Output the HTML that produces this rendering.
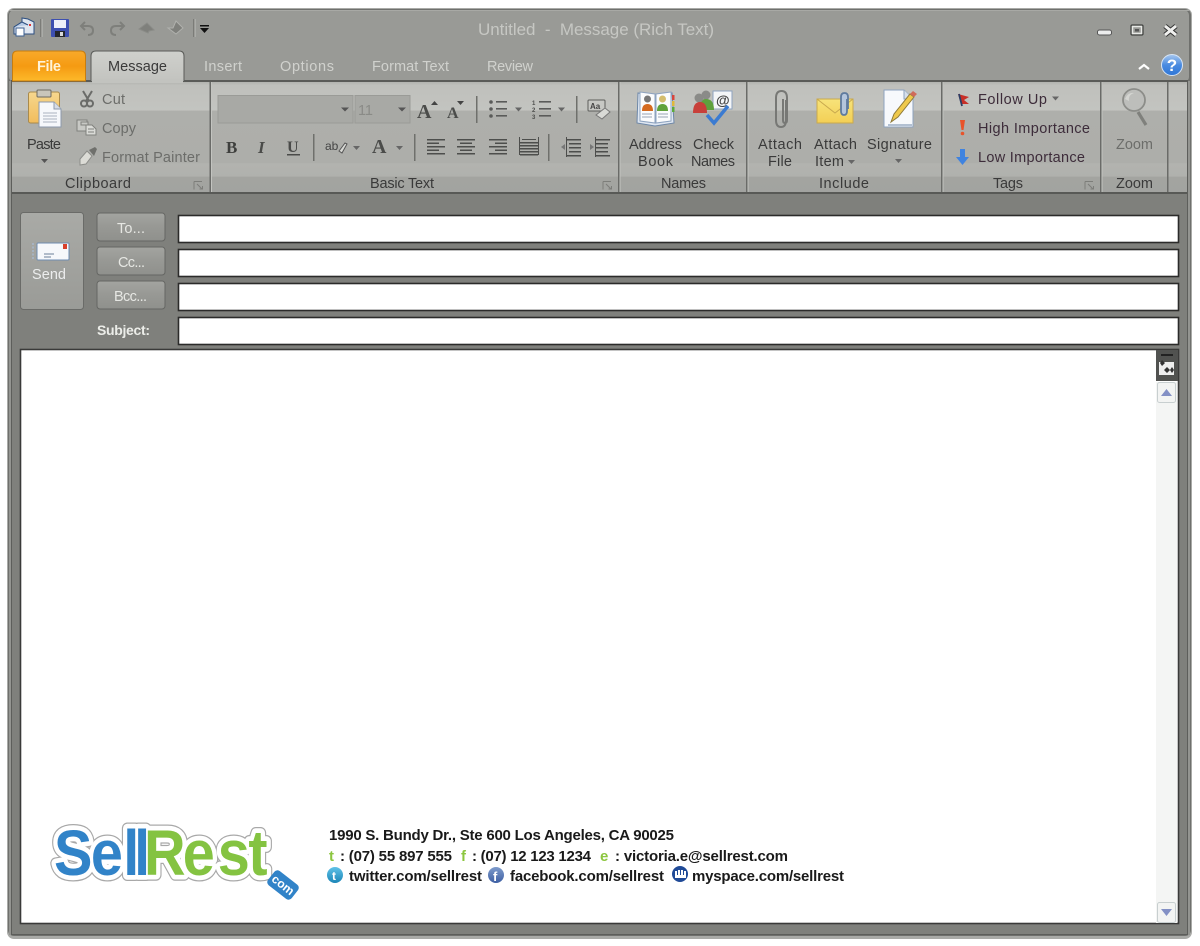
<!DOCTYPE html>
<html lang="en"><head><meta charset="utf-8"><title>Untitled - Message (Rich Text)</title>
<style>
html,body{margin:0;padding:0;background:#fff;width:1200px;height:946px;overflow:hidden}
svg{position:absolute;left:0;top:0;display:block;filter:blur(.3px)}
text{font-family:"Liberation Sans",sans-serif;font-size:14.500px;fill:#3c3c3c;white-space:pre}
.tab{fill:#d0d1cd}
.d{fill:#6c6d6a}
.l{fill:#e4e5e1}
.g{fill:#3a3a3a}
.f{font-weight:bold;fill:#1a1a1a;font-size:15px}
.gr{font-weight:bold;fill:#8cc63f;font-size:15px}
</style></head><body>
<svg width="1200" height="946" viewBox="0 0 1200 946" xmlns="http://www.w3.org/2000/svg">
<defs>
<linearGradient id="rib" x1="0" y1="0" x2="0" y2="1">
<stop offset="0" stop-color="#b2b3af"/><stop offset=".03" stop-color="#bfc0bc"/><stop offset=".25" stop-color="#c3c4c0"/><stop offset=".26" stop-color="#aeafab"/><stop offset=".72" stop-color="#adaeaa"/><stop offset=".73" stop-color="#b2b3af"/><stop offset=".84" stop-color="#b0b1ad"/><stop offset=".85" stop-color="#a3a4a0"/><stop offset="1" stop-color="#a2a3a0"/>
</linearGradient>
<linearGradient id="file" x1="0" y1="0" x2="0" y2="1"><stop offset="0" stop-color="#f9a92a"/><stop offset=".5" stop-color="#f59a12"/><stop offset="1" stop-color="#fdb92a"/></linearGradient>
<linearGradient id="msg" x1="0" y1="0" x2="0" y2="1"><stop offset="0" stop-color="#cfd0cc"/><stop offset="1" stop-color="#c2c3bf"/></linearGradient>
<linearGradient id="btn" x1="0" y1="0" x2="0" y2="1"><stop offset="0" stop-color="#a3a4a0"/><stop offset=".45" stop-color="#989995"/><stop offset="1" stop-color="#8f908c"/></linearGradient>
<linearGradient id="send" x1="0" y1="0" x2="0" y2="1"><stop offset="0" stop-color="#a9aaa6"/><stop offset="1" stop-color="#9a9b97"/></linearGradient>
<linearGradient id="help" x1="0" y1="0" x2="0" y2="1"><stop offset="0" stop-color="#a8c8ef"/><stop offset=".5" stop-color="#4a8be0"/><stop offset="1" stop-color="#2f76d6"/></linearGradient>
<linearGradient id="pap" x1="0" y1="0" x2="0" y2="1"><stop offset="0" stop-color="#f6d78e"/><stop offset="1" stop-color="#f2bc5c"/></linearGradient>
<linearGradient id="env" x1="0" y1="0" x2="0" y2="1"><stop offset="0" stop-color="#f7e37a"/><stop offset="1" stop-color="#f3cf55"/></linearGradient>
<linearGradient id="tw" x1="0" y1="0" x2="0" y2="1"><stop offset="0" stop-color="#5fc2e8"/><stop offset="1" stop-color="#1c86b8"/></linearGradient>
<linearGradient id="fb" x1="0" y1="0" x2="0" y2="1"><stop offset="0" stop-color="#7f9ccc"/><stop offset="1" stop-color="#3d5fa3"/></linearGradient>
</defs>

<!-- window frame -->
<rect x="7" y="8" width="1185" height="931" rx="7" fill="#a9aaa7"/>
<rect x="8" y="9" width="1183" height="927" rx="6" fill="#6f706d"/>
<rect x="9" y="10" width="1180" height="72" rx="5" fill="#999a96"/>
<rect x="9" y="10" width="1180" height="1" fill="#a8a9a5"/>
<rect x="9" y="81" width="3" height="854" fill="#949591"/>
<rect x="1188" y="81" width="2" height="854" fill="#949591"/>
<rect x="11" y="81" width="1177" height="854" fill="#5d5e5b"/>
<rect x="12" y="194" width="1175" height="740" fill="#7f807c"/>

<!-- ribbon -->
<rect x="11" y="80" width="1177" height="2" fill="#5a5b58"/>
<rect x="12" y="82" width="1175" height="112" fill="url(#rib)"/>
<rect x="12" y="192" width="1175" height="2" fill="#585956"/>
<g fill="#6a6b68"><rect x="209.500" y="82" width="1.500" height="110"/><rect x="618" y="82" width="1.500" height="110"/><rect x="746" y="82" width="1.500" height="110"/><rect x="941" y="82" width="1.500" height="110"/><rect x="1100" y="82" width="1.500" height="110"/><rect x="1167" y="82" width="1.500" height="110"/></g>
<g fill="#c3c4c0"><rect x="211" y="82" width="1" height="110"/><rect x="619.500" y="82" width="1" height="110"/><rect x="747.500" y="82" width="1" height="110"/><rect x="942.500" y="82" width="1" height="110"/><rect x="1101.500" y="82" width="1" height="110"/></g>

<!-- tabs -->
<path d="M12.500 81V56q0-5 5-5h63q5 0 5 5v25z" fill="url(#file)" stroke="#c77d10"/>
<path d="M91 81.500V56q0-5 5-5h83q5 0 5 5v25.500z" fill="url(#msg)" stroke="#5a5b58"/>
<rect x="92" y="79" width="91" height="4" fill="#c2c3bf"/>
<text x="37" y="71" textLength="24" style="font-weight:bold;fill:#fff3d8">File</text>
<text x="108" y="71" textLength="59" class="g">Message</text>
<text x="204" y="71" textLength="38" class="tab">Insert</text>
<text x="280" y="71" textLength="54" class="tab">Options</text>
<text x="372" y="71" textLength="77" class="tab">Format Text</text>
<text x="487" y="71" textLength="46" class="tab">Review</text>

<!-- title -->
<text x="478" y="35" textLength="236" style="font-size:17px;fill:#c6c7c3">Untitled  -  Message (Rich Text)</text>

<!-- QAT -->
<g>
<path d="M14 27l8-5v-4l6 1 6 3v12H14z" fill="#dfe6f0" stroke="#2d4f80" stroke-width="1"/>
<path d="M14 27l8-5 6 3" fill="#b7cbe6" stroke="#2d4f80"/>
<rect x="16" y="28" width="8" height="8" fill="#fff" stroke="#3b5f92"/>
<rect x="29" y="24" width="2" height="2" fill="#d33"/>
<rect x="40" y="19" width="1.500" height="18" fill="#7b7c78"/><rect x="41.500" y="19" width="1" height="18" fill="#bcbdb9"/>
<rect x="51" y="19" width="18" height="18" rx="1" fill="#3d4fb0"/>
<rect x="54" y="20" width="12" height="8" fill="#eef0fa"/>
<rect x="55" y="31" width="10" height="6" fill="#24262c"/><rect x="60" y="32" width="3" height="4" fill="#d8d9dc"/>
<path d="M85 22l-4 4 4 4M82 26h6q5 0 5 4.500t-5 4.500" fill="none" stroke="#7e7f7b" stroke-width="2"/>
<path d="M120 22l4 4-4 4M123 26h-7q-5 0-5 4.500t5 4.500" fill="none" stroke="#7e7f7b" stroke-width="2"/>
<path d="M147 23l7 7-5 1-1 2-9-4z" fill="#7f807c" stroke="#8a8b87"/>
<path d="M176 21l7 7-7 6-8-6h5z" fill="#7f807c" stroke="#b0b1ad"/>
<rect x="193" y="19" width="1.500" height="18" fill="#7b7c78"/><rect x="194.500" y="19" width="1" height="18" fill="#bcbdb9"/>
<rect x="200" y="25" width="9" height="1.500" fill="#111"/><path d="M200 28h9l-4.500 5z" fill="#111"/>
</g>

<!-- window controls -->
<rect x="1097.500" y="30" width="14" height="5" rx="2" fill="#eceded" stroke="#555" stroke-width="1"/>
<rect x="1131" y="25" width="12" height="10" rx="1" fill="none" stroke="#2d2e2c" stroke-width="1"/>
<rect x="1132.500" y="26.500" width="9" height="7" fill="none" stroke="#e8e9e6" stroke-width="1.500"/>
<rect x="1135" y="29" width="4" height="2.500" fill="#555"/>
<path d="M1165 26l11 9M1176 26l-11 9" stroke="#333" stroke-width="5"/>
<path d="M1165 26l11 9M1176 26l-11 9" stroke="#f0f0ee" stroke-width="3"/>
<path d="M1139 69l5-4 5 4" fill="none" stroke="#fff" stroke-width="2.200"/>
<circle cx="1172" cy="65" r="10.500" fill="url(#help)" stroke="#d8e6f6" stroke-width="1"/>
<text x="1172" y="71" text-anchor="middle" style="font-size:17px;font-weight:bold;fill:#fff">?</text>

<!-- Clipboard -->
<rect x="28.500" y="92" width="31" height="31" rx="2" fill="url(#pap)" stroke="#a98a4c"/>
<rect x="37" y="90" width="14" height="7" rx="1" fill="#c9c6bb" stroke="#6d6a60"/>
<path d="M39 102h15l7 7v18H39z" fill="#f6f8fb" stroke="#8d9aad"/>
<path d="M54 102v7h7" fill="#d6dce6" stroke="#8d9aad"/>
<path d="M43 113h14M43 116h14M43 119h14M43 122h14" stroke="#a9b2bf"/>
<text x="27" y="149" textLength="34" class="g">Paste</text>
<path d="M41 159h7l-3.500 4z" fill="#555"/>
<g fill="none" stroke="#6b6c69"><path d="M83 91l6 10M92 91l-6 10" stroke-width="2"/><circle cx="84" cy="103.500" r="3" stroke-width="2"/><circle cx="90" cy="103.500" r="3" stroke-width="2"/></g>
<text x="102" y="104" textLength="23" class="d">Cut</text>
<g stroke="#80817d" fill="#c8c9c5"><rect x="77" y="120" width="10" height="11"/><rect x="81" y="122" width="7" height="3"/><path d="M86 125h6l4 4v6H86z" fill="#dadbd7"/></g>
<path d="M88 129h6M88 132h6" stroke="#80817d"/>
<text x="102" y="133" textLength="34" class="d">Copy</text>
<path d="M80 159l7-8 5 5-6 8-6 1z" fill="#dcdcd6" stroke="#8d8e8a"/>
<path d="M89 150l6-3 2 2-3 7z" fill="#6f706c"/>
<text x="102" y="162" textLength="98" class="d">Format Painter</text>
<text x="65" y="188" textLength="66" class="g">Clipboard</text>
<g fill="none" stroke="#7d7e7a"><path d="M194 181.500h8M194 181.500v8"/><path d="M197 184l5 5M199.500 189h3v-3"/></g>
<g fill="none" stroke="#7d7e7a"><path d="M603 181.500h8M603 181.500v8"/><path d="M606 184l5 5M608.500 189h3v-3"/></g>
<g fill="none" stroke="#7d7e7a"><path d="M1085 181.500h8M1085 181.500v8"/><path d="M1088 184l5 5M1090.500 189h3v-3"/></g>

<!-- Basic Text row 1 -->
<rect x="218" y="95.500" width="135" height="27.500" fill="#a8a9a5" stroke="#9a9b97"/>
<rect x="355" y="95.500" width="55" height="27.500" fill="#a8a9a5" stroke="#9a9b97"/>
<path d="M341 107.500h8l-4 4z" fill="#555"/><path d="M398 107.500h8l-4 4z" fill="#555"/>
<text x="358" y="115" textLength="15" style="fill:#8a8b87">11</text>
<text x="417" y="118" textLength="15" style="font-family:'Liberation Serif',serif;font-size:20px;font-weight:bold;fill:#4b4c4a">A</text>
<path d="M431 105l3.500-4 3.500 4z" fill="#444"/>
<text x="447" y="118" textLength="12" style="font-family:'Liberation Serif',serif;font-size:16px;font-weight:bold;fill:#4b4c4a">A</text>
<path d="M457 101h7l-3.500 4z" fill="#444"/>
<g fill="#6f706c"><rect x="476" y="96" width="1.500" height="27"/><rect x="576" y="96" width="1.500" height="27"/><rect x="313" y="134" width="1.500" height="27"/><rect x="414" y="134" width="1.500" height="27"/><rect x="548" y="134" width="1.500" height="27"/></g>
<g fill="#5a5b59"><circle cx="491" cy="102" r="1.800"/><circle cx="491" cy="109" r="1.800"/><circle cx="491" cy="116" r="1.800"/>
<rect x="496" y="101" width="11" height="1.600"/><rect x="496" y="108" width="11" height="1.600"/><rect x="496" y="115" width="11" height="1.600"/>
<rect x="539" y="101" width="12" height="1.600"/><rect x="539" y="108" width="12" height="1.600"/><rect x="539" y="115" width="12" height="1.600"/></g>
<g style="fill:#4d4e4c"><text x="532" y="105" style="font-size:6px;font-weight:bold;fill:#4d4e4c">1</text><text x="532" y="112" style="font-size:6px;font-weight:bold;fill:#4d4e4c">2</text><text x="532" y="119" style="font-size:6px;font-weight:bold;fill:#4d4e4c">3</text></g>
<path d="M515 107.500h7l-3.500 4z" fill="#666"/><path d="M558 107.500h7l-3.500 4z" fill="#666"/>
<rect x="588" y="100" width="17" height="11" rx="1" fill="#c7c8c4" stroke="#5d5e5b"/>
<text x="590" y="109" style="font-size:8px;font-weight:bold;fill:#444">Aa</text>
<path d="M596 115l9-7 5 4-8 7z" fill="#d9dad6" stroke="#777"/>

<!-- Basic Text row 2 -->
<text x="226" y="153" style="font-family:'Liberation Serif',serif;font-size:17px;font-weight:bold;fill:#3e3f3d">B</text>
<text x="258" y="153" style="font-family:'Liberation Serif',serif;font-size:17px;font-style:italic;font-weight:bold;fill:#4a4b49">I</text>
<text x="287" y="152" style="font-family:'Liberation Serif',serif;font-size:16px;font-weight:bold;fill:#4a4b49">U</text>
<rect x="287" y="154" width="13" height="1.500" fill="#4a4b49"/>
<text x="325" y="150" style="font-size:12px;fill:#444">ab</text>
<path d="M339 151l6-8 2 1-5 9z" fill="#d8d9d5" stroke="#555"/>
<path d="M353 146h7l-3.500 4z" fill="#666"/>
<text x="372" y="153" style="font-family:'Liberation Serif',serif;font-size:20px;font-weight:bold;fill:#4b4c4a">A</text>
<path d="M396 146h7l-3.500 4z" fill="#666"/>
<g fill="#4d4e4c">
<rect x="427" y="139" width="18" height="1.500"/><rect x="427" y="142.500" width="12" height="1.500"/><rect x="427" y="146" width="18" height="1.500"/><rect x="427" y="149.500" width="12" height="1.500"/><rect x="427" y="153" width="18" height="1.500"/>
<rect x="457" y="139" width="18" height="1.500"/><rect x="460" y="142.500" width="12" height="1.500"/><rect x="457" y="146" width="18" height="1.500"/><rect x="460" y="149.500" width="12" height="1.500"/><rect x="457" y="153" width="18" height="1.500"/>
<rect x="489" y="139" width="18" height="1.500"/><rect x="495" y="142.500" width="12" height="1.500"/><rect x="489" y="146" width="18" height="1.500"/><rect x="495" y="149.500" width="12" height="1.500"/><rect x="489" y="153" width="18" height="1.500"/>
<rect x="520" y="142" width="18" height="1.500"/><rect x="520" y="145" width="18" height="1.500"/><rect x="520" y="148" width="18" height="1.500"/><rect x="520" y="151" width="18" height="1.500"/><rect x="520" y="154" width="18" height="1.500"/>
<path d="M519 137v18h1v-18zM538 137v18h1v-18zM522 139h14v1h-14z"/>
<rect x="567" y="139" width="14" height="1.500"/><rect x="569" y="143" width="12" height="1.500"/><rect x="569" y="147" width="12" height="1.500"/><rect x="569" y="151" width="12" height="1.500"/><rect x="567" y="155" width="14" height="1.500"/>
<rect x="596" y="139" width="14" height="1.500"/><rect x="596" y="143" width="12" height="1.500"/><rect x="596" y="147" width="12" height="1.500"/><rect x="596" y="151" width="12" height="1.500"/><rect x="596" y="155" width="14" height="1.500"/>
<rect x="566" y="137" width="1" height="20"/><rect x="595" y="137" width="1" height="20"/>
</g>
<path d="M561 147l4-3v6z" fill="#777"/><path d="M594 147l-4-3v6z" fill="#777"/>
<text x="370" y="188" textLength="64" class="g">Basic Text</text>

<!-- Names -->
<path d="M637 123l1-30 17 3 17-3 2 30-19 3z" fill="#dfe7f2" stroke="#6d87a8"/>
<path d="M640 92l15 2v29l-15-2zM671 92l-15 2v29l15-2z" fill="#fbfcfd" stroke="#8ea3bf"/>
<circle cx="647.500" cy="99" r="3.500" fill="#777"/><path d="M642 111q0-7 5.500-7t5.500 7z" fill="#d46a1f"/>
<circle cx="662.500" cy="99" r="3.500" fill="#d4bd6d"/><path d="M657 111q0-7 5.500-7t5.500 7z" fill="#5fa23a"/>
<path d="M642 114h10M642 117h10M658 114h10M658 117h10" stroke="#9aa5b5"/>
<rect x="672" y="95" width="2.500" height="5" fill="#d8453d"/><rect x="672" y="101" width="2.500" height="5" fill="#e0b83a"/><rect x="672" y="107" width="2.500" height="5" fill="#5cab3c"/>
<rect x="713" y="91" width="19" height="18" fill="#f4f6f8" stroke="#8ea3bf"/>
<text x="716" y="105" style="font-size:14px;font-weight:bold;fill:#444">@</text>
<circle cx="706" cy="95" r="4.500" fill="#8a8b88"/><path d="M698 110q0-11 8-11t8 11z" fill="#5fa13d"/>
<circle cx="699" cy="98" r="4.500" fill="#8a8b88"/><path d="M693 113q0-11 7-11t7 11z" fill="#c8403a"/>
<path d="M707 115l7 8 14-17" fill="none" stroke="#3b7bd1" stroke-width="3.500"/>
<text x="629" y="149" textLength="53" class="g">Address</text>
<text x="638" y="166" textLength="35" class="g">Book</text>
<text x="693" y="149" textLength="41" class="g">Check</text>
<text x="691" y="166" textLength="44" class="g">Names</text>
<text x="661" y="188" textLength="45" class="g">Names</text>

<!-- Include -->
<path d="M786 100v20q0 7-5 7t-5-7V98q0-7 5.500-7t5.500 7v22q0 3-2 3t-2-3V99" fill="none" stroke="#777875" stroke-width="2"/>
<rect x="817" y="99" width="36" height="24" fill="url(#env)" stroke="#c9a94e"/>
<path d="M817 99l18 14 18-14" fill="none" stroke="#c9a94e"/>
<path d="M847 99v12q0 4-3 4t-3-4V97q0-4 3.500-4t3.500 4v12" fill="#b5c6dc" stroke="#5f7b9e" stroke-width="1.800"/>
<path d="M884 90h20l9 9v28h-29z" fill="#f7f9fc" stroke="#8ea3bf"/>
<path d="M904 90v9h9" fill="#d6dfea" stroke="#8ea3bf"/>
<path d="M891 122l3-8 16-20 4 3-16 20z" fill="#efc94c" stroke="#8e7a3a"/>
<path d="M910 94l3-3 4 3-3 3z" fill="#d06a5a"/><path d="M888 125h24" stroke="#6d87a8"/>
<text x="758" y="149" textLength="44" class="g">Attach</text>
<text x="768" y="166" textLength="24" class="g">File</text>
<text x="814" y="149" textLength="43" class="g">Attach</text>
<text x="815" y="166" textLength="29" class="g">Item</text>
<path d="M848 160h7l-3.500 4z" fill="#666"/>
<text x="867" y="149" textLength="65" class="g">Signature</text>
<path d="M895 159h7l-3.500 4z" fill="#666"/>
<text x="819" y="188" textLength="50" class="g">Include</text>

<!-- Tags -->
<path d="M958 94l11 3-5 3 5 4-8 0z" fill="#c83028"/><path d="M959 94l3 12" stroke="#2c3e66" stroke-width="1.800"/>
<text x="978" y="104" textLength="69" style="fill:#3d2c3a">Follow Up</text>
<path d="M1052 96.500h7l-3.500 4z" fill="#666"/>
<path d="M960 120h5l-1.500 10h-2z" fill="#e8532a"/><circle cx="962.500" cy="133.500" r="1.800" fill="#e8532a"/>
<text x="978" y="133" textLength="112" style="fill:#3d2c3a">High Importance</text>
<path d="M960 149h5v8h4l-6.500 8-6.500-8h4z" fill="#3f83e0"/>
<text x="978" y="162" textLength="107" style="fill:#3d2c3a">Low Importance</text>
<text x="993" y="188" textLength="30" class="g">Tags</text>

<!-- Zoom -->
<circle cx="1134" cy="100" r="11" fill="#bdbebb" stroke="#8c8d89" stroke-width="1.800"/>
<path d="M1125 99q3-7 9-6-6 2-5 8z" fill="#d4d5d1"/>
<path d="M1138 112l8 13" stroke="#7f807c" stroke-width="3.200"/>
<text x="1116" y="149" textLength="37" class="d">Zoom</text>
<text x="1116" y="188" textLength="37" class="g">Zoom</text>

<!-- Send & address -->
<rect x="20.500" y="212.500" width="63" height="97" rx="3" fill="url(#send)" stroke="#6a6b68"/>
<rect x="37" y="243" width="32" height="17" rx="1" fill="#f6f8fb" stroke="#6e8cb0"/>
<path d="M44 254h10M44 257h7" stroke="#6c7f99"/>
<rect x="63" y="244" width="4" height="5" fill="#d8402c"/>
<path d="M33 243v17" stroke="#a8b8cc" stroke-width="1.500" stroke-dasharray="2 1.500"/>
<text x="32" y="279" textLength="34" style="fill:#eceded">Send</text>
<rect x="97" y="213" width="68" height="28" rx="3" fill="url(#btn)" stroke="#656663"/>
<rect x="97" y="247" width="68" height="28" rx="3" fill="url(#btn)" stroke="#656663"/>
<rect x="97" y="281" width="68" height="28" rx="3" fill="url(#btn)" stroke="#656663"/>
<text x="117" y="233" textLength="28" style="fill:#e6e7e3">To...</text>
<text x="118" y="267" textLength="27" style="fill:#e6e7e3">Cc...</text>
<text x="114" y="301" textLength="33" style="fill:#e6e7e3">Bcc...</text>
<text x="97" y="335" textLength="53" style="font-size:14px;font-weight:bold;fill:#ecede9">Subject:</text>
<g fill="#fff" stroke="#2b2b2a" stroke-width="1.600">
<rect x="178.500" y="215.500" width="1000" height="27"/>
<rect x="178.500" y="249.500" width="1000" height="27"/>
<rect x="178.500" y="283.500" width="1000" height="27"/>
<rect x="178.500" y="317.500" width="1000" height="27"/>
</g>

<!-- body -->
<rect x="20.500" y="349.500" width="1158" height="574" fill="#fff" stroke="#3a3a39" stroke-width="1.600"/>
<rect x="1156" y="382" width="21" height="541" fill="#f4f5f4"/>
<rect x="1156" y="350" width="22" height="31" fill="#515250"/>
<rect x="1161" y="354" width="12" height="2" fill="#222"/>
<path d="M1159 362h15v13h-15z" fill="#eee"/><path d="M1162 360l3 3-3 3-2-3zM1167 367l3 3-3 3-3-3zM1172 367l2 3-2 3-2-3z" fill="#333"/>
<rect x="1157.500" y="382.500" width="18" height="20" rx="2" fill="#f3f4f3" stroke="#c8cfd0"/>
<path d="M1161 396l5.500-7 5.500 7z" fill="#8390c5"/>
<rect x="1157.500" y="902.500" width="18" height="20" rx="2" fill="#f3f4f3" stroke="#c8cfd0"/>
<path d="M1161 909h11l-5.500 7z" fill="#8390c5"/>

<!-- logo -->
<g transform="scale(.9 1)" style="font-weight:bold">
<text x="60 101 137 149 160 203 242 276" y="875" style="font-size:64px;font-weight:bold;fill:#fff;stroke:#a8a8a8;stroke-width:12;stroke-linejoin:round">SellRest</text>
<text x="60 101 137 149 160 203 242 276" y="875" style="font-size:64px;font-weight:bold;fill:#fff;stroke:#fff;stroke-width:9.500;stroke-linejoin:round">SellRest</text>
<text x="60 101 137 149" y="875" style="font-size:64px;font-weight:bold;fill:#3183c8">Sell</text>
<text x="160 203 242 276" y="875" style="font-size:64px;font-weight:bold;fill:#84c341">Rest</text>
</g>
<g transform="translate(283 885) rotate(38)">
<rect x="-15" y="-9" width="30" height="18" rx="4" fill="#3183c8"/>
<text x="0" y="4" text-anchor="middle" style="font-size:12px;font-weight:bold;fill:#fff">com</text>
</g>

<!-- signature lines -->
<text x="329" y="840" textLength="345" class="f">1990 S. Bundy Dr., Ste 600 Los Angeles, CA 90025</text>
<text x="329" y="861" class="gr">t</text>
<text x="340" y="861" textLength="112" class="f">: (07) 55 897 555</text>
<text x="461" y="861" class="gr">f</text>
<text x="472" y="861" textLength="119" class="f">: (07) 12 123 1234</text>
<text x="600" y="861" class="gr">e</text>
<text x="615" y="861" textLength="173" class="f">: victoria.e@sellrest.com</text>
<circle cx="335" cy="875" r="8" fill="url(#tw)"/>
<text x="332" y="880" style="font-size:12px;font-weight:bold;fill:#fff">t</text>
<text x="349" y="881" textLength="133" class="f">twitter.com/sellrest</text>
<circle cx="496" cy="875" r="8" fill="url(#fb)"/>
<text x="493" y="881" style="font-size:13px;font-weight:bold;fill:#fff">f</text>
<text x="510" y="881" textLength="154" class="f">facebook.com/sellrest</text>
<circle cx="680" cy="874" r="8" fill="#1f4a97"/>
<path d="M675 871h2v4h-2zM678 870h2v5h-2zM681 870h2v5h-2zM684 871h2v4h-2zM675 875h11v3h-11z" fill="#fff"/>
<text x="692" y="881" textLength="152" class="f">myspace.com/sellrest</text>
</svg>
</body></html>
